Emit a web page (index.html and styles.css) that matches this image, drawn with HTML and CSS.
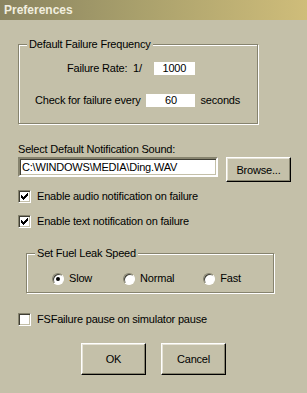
FILE: index.html
```html
<!DOCTYPE html>
<html>
<head>
<meta charset="utf-8">
<link rel="stylesheet" href="styles.css">
</head>
<body>
<div class="dialog">
  <div class="titlebar">Preferences</div>
  <div class="content">
    <div class="group g1">
      <span class="legend">Default Failure Frequency</span>
      <div class="row r1"><span>Failure Rate:&nbsp; 1/</span><span class="num n1">1000</span></div>
      <div class="row r2"><span>Check for failure every</span><span class="num n2">60</span><span class="unit">seconds</span></div>
    </div>

    <div class="sound-label">Select Default Notification Sound:</div>
    <div class="path-row">
      <div class="path">C:\WINDOWS\MEDIA\Ding.WAV</div>
      <div class="btn browse">Browse...</div>
    </div>

    <div class="check c1"><span class="box"><svg width="7" height="7" viewBox="0 0 7 7"><path d="M0 2h1v1h1v1h1v-1h1v-1h1v-1h1v-1h1v3h-1v1h-1v1h-1v1h-1v1h-1v-1h-1v-1h-1z" fill="#000"/></svg></span>Enable audio notification on failure</div>
    <div class="check c2"><span class="box"><svg width="7" height="7" viewBox="0 0 7 7"><path d="M0 2h1v1h1v1h1v-1h1v-1h1v-1h1v-1h1v3h-1v1h-1v1h-1v1h-1v1h-1v-1h-1v-1h-1z" fill="#000"/></svg></span>Enable text notification on failure</div>

    <div class="group g2">
      <span class="legend">Set Fuel Leak Speed</span>
      <div class="radios">
        <div class="radio r-slow"><span class="dot on"></span>Slow</div>
        <div class="radio r-normal"><span class="dot"></span>Normal</div>
        <div class="radio r-fast"><span class="dot"></span>Fast</div>
      </div>
    </div>

    <div class="check c3"><span class="box"></span>FSFailure pause on simulator pause</div>

    <div class="buttons">
      <div class="btn">OK</div>
      <div class="btn">Cancel</div>
    </div>
  </div>
</div>
</body>
</html>
```

FILE: styles.css
```css
html, body {
  margin: 0;
  padding: 0;
}
body {
  background: #c4c0a9;
  font-family: "Liberation Sans", Arial, sans-serif;
  font-size: 11px;
  letter-spacing: -0.2px;
  color: #000;
}
.dialog {
  width: 307px;
  height: 393px;
  overflow: hidden;
}
.titlebar {
  height: 20px;
  line-height: 21px;
  padding-left: 4px;
  font-size: 12px;
  font-weight: bold;
  letter-spacing: 0;
  color: #f1eedf;
  background: linear-gradient(to right, #8a8460 0%, #a9a06c 45%, #cfbd7a 100%);
}
.content {
  padding: 0 0 0 18px;
}
.group {
  position: relative;
  box-sizing: border-box;
  border: 1px solid #86836e;
  box-shadow: inset 1px 1px 0 #fff, 1px 1px 0 #fff;
}
.legend {
  position: absolute;
  top: -7px;
  left: 8px;
  padding: 0 2px;
  line-height: 13px;
  background: #c4c0a9;
}
.g1 {
  margin-top: 24px;
  width: 240px;
  height: 80px;
}
.row {
  display: flex;
  align-items: center;
  height: 13px;
  line-height: 13px;
}
.r1 {
  margin-top: 17px;
  margin-left: 48px;
}
.r2 {
  margin-top: 19px;
  margin-left: 16px;
}
.num {
  background: #fff;
  text-align: center;
  height: 13px;
}
.n1 {
  width: 41px;
  margin-left: 12px;
}
.n2 {
  width: 49px;
  margin-left: 6px;
}
.unit {
  margin-left: 5px;
}
.sound-label {
  margin-top: 19px;
  line-height: 13px;
}
.path-row {
  display: flex;
  align-items: flex-start;
  margin-top: 1px;
}
.path {
  box-sizing: border-box;
  width: 200px;
  height: 20px;
  line-height: 16px;
  padding-left: 2px;
  background: #fff;
  border-top: 2px solid #86836e;
  border-left: 2px solid #86836e;
  border-bottom: 2px solid #fff;
  border-right: 2px solid #fff;
  box-shadow: inset 1px 1px 0 #3f3e34, inset -1px -1px 0 #c4c0a9;
}
.btn {
  box-sizing: border-box;
  display: flex;
  align-items: center;
  justify-content: center;
  background: #c4c0a9;
  border-top: 1px solid #fff;
  border-left: 1px solid #fff;
  border-right: 1px solid #000;
  border-bottom: 1px solid #000;
  box-shadow: inset -1px -1px 0 #86836e, inset 1px 1px 0 #e6e3d6;
}
.browse {
  width: 65px;
  height: 25px;
  margin-left: 8px;
}
.check {
  display: flex;
  align-items: center;
  height: 13px;
  line-height: 13px;
}
.box {
  box-sizing: border-box;
  width: 13px;
  height: 13px;
  margin-right: 6px;
  background: #fff;
  border-top: 1px solid #86836e;
  border-left: 1px solid #86836e;
  border-bottom: 1px solid #fff;
  border-right: 1px solid #fff;
  box-shadow: inset 1px 1px 0 #3f3e34, inset -1px -1px 0 #c4c0a9;
  display: flex;
  align-items: center;
  justify-content: center;
}
.c1 { margin-top: 8px; }
.c2 { margin-top: 12px; }
.g2 {
  margin-top: 25px;
  margin-left: 8px;
  width: 248px;
  height: 40px;
}
.radios {
  display: flex;
  align-items: center;
  height: 13px;
  margin-top: 18px;
  margin-left: 25px;
}
.radio {
  display: flex;
  align-items: center;
  line-height: 13px;
}
.r-normal { margin-left: 31px; }
.r-fast { margin-left: 29px; }
.dot {
  box-sizing: border-box;
  width: 12px;
  height: 12px;
  border-radius: 50%;
  margin-right: 5px;
  background: #fff;
  border: 1px solid;
  border-color: #86836e #fff #fff #86836e;
  box-shadow: inset 1px 1px 0 #3f3e34;
  display: flex;
  align-items: center;
  justify-content: center;
}
.dot.on::after {
  content: "";
  width: 4px;
  height: 4px;
  border-radius: 50%;
  background: #000;
}
.c3 { margin-top: 20px; }
.buttons {
  display: flex;
  justify-content: center;
  gap: 15px;
  margin-top: 17px;
  margin-left: -18px;
}
.buttons .btn {
  width: 65px;
  height: 32px;
}
```
